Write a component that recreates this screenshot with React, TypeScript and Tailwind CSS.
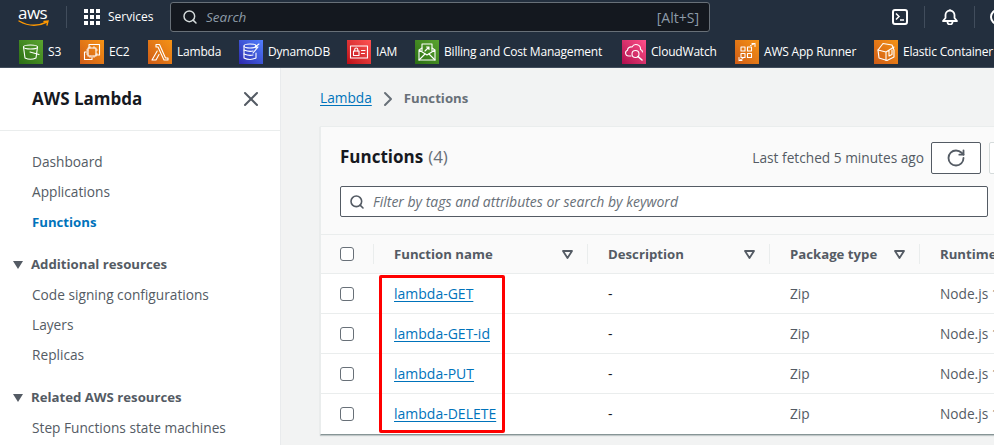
import type { ReactNode } from 'react';
import { ChevronRight, Search, X, RotateCw } from 'lucide-react';

const font = 'font-["Open_Sans",sans-serif]';

const Tile = ({ tone, children }: { tone: string; children: ReactNode }) => (
    <span className={`w-6 h-6 shrink-0 flex items-center justify-center ${tone}`}>
        <svg width="20" height="20" viewBox="0 0 20 20" fill="none" stroke="white" strokeWidth="1.1" strokeLinejoin="round" strokeLinecap="round">
            {children}
        </svg>
    </span>
);

const green = 'bg-linear-to-tr from-[#2a6e14] to-[#5ba52f]';
const orange = 'bg-linear-to-tr from-[#d05c17] to-[#f59314]';
const blue = 'bg-linear-to-tr from-[#2e27ad] to-[#527fff]';
const red = 'bg-linear-to-tr from-[#bd0816] to-[#ff5252]';
const pink = 'bg-linear-to-tr from-[#b0084d] to-[#ff4f8b]';

const favorites = [
    {
        label: 'S3', tone: green, w: 'w-[61px]', icon: (
            <>
                <ellipse cx="9.5" cy="5" rx="7" ry="2" />
                <path d="M2.5 5 L4 16 Q9.5 18.5 15 16 L16.5 5" />
                <path d="M9 10 L18 12.5" />
            </>
        ),
    },
    {
        label: 'EC2', tone: orange, w: 'w-[68px]', icon: (
            <>
                <path d="M7 6 V2.5 H17.5 V13 H14" />
                <path d="M5 10 H2.5 V17.5 H10 V15" />
                <rect x="6" y="6" width="8" height="8" />
                <path d="M8 4.5v1.5M12 4.5v1.5M8 14v1.5M12 14v1.5M4.5 8H6M4.5 12H6M14 8h1.5M14 12h1.5" strokeWidth="0.8" />
            </>
        ),
    },
    {
        label: 'Lambda', tone: orange, w: 'w-[91px]', icon: (
            <path d="M6 2.5 H9.5 L15.5 16 H18 V18 H14 L8 5 H6 Z M7.2 9 L2 18 H6 L9 12.5" />
        ),
    },
    {
        label: 'DynamoDB', tone: blue, w: 'w-[108px]', icon: (
            <>
                <ellipse cx="9" cy="4" rx="6" ry="2" />
                <path d="M3 4 V16 Q9 19 15 16 V11" />
                <path d="M3 8 Q8 10 12 9M3 12 Q8 14 12 13M15 4 V6" />
                <path d="M12 11 L17 5 H14 L18 2" />
            </>
        ),
    },
    {
        label: 'IAM', tone: red, w: 'w-[68px]', icon: (
            <>
                <rect x="1.5" y="4" width="17" height="12" />
                <rect x="4.5" y="9" width="5.5" height="4.5" />
                <path d="M5.7 9 V7.5 A1.5 1.5 0 0 1 8.8 7.5 V9M12.5 8.5h3.5M12.5 11.5h3" />
            </>
        ),
    },
    {
        label: 'Billing and Cost Management', tone: green, w: 'w-[207px]', icon: (
            <>
                <path d="M5 9 V2 H15 V9" />
                <path d="M2 8 L5 6M18 8 L15 6M2 8 V18 H18 V8 L10 13 Z" />
                <path d="M2 18 L8 12M18 18 L12 12M8 9 L12 5M9.5 5 H12 V7.5" />
            </>
        ),
    },
    {
        label: 'CloudWatch', tone: pink, w: 'w-[113px]', icon: (
            <>
                <path d="M7 14 H4.5 A3 3 0 0 1 3.5 8.2 A3.5 3.5 0 0 1 8 5 A4.5 4.5 0 0 1 16.5 7.5 A3 3 0 0 1 18.5 10" />
                <circle cx="11.5" cy="12" r="3.5" />
                <path d="M14 14.5 L18 18" strokeWidth="1.6" />
            </>
        ),
    },
    {
        label: 'AWS App Runner', tone: orange, w: 'w-[139px]', icon: (
            <>
                <rect x="4" y="5" width="4" height="4" />
                <rect x="10.5" y="5" width="4" height="4" />
                <rect x="4" y="11.5" width="4" height="4" />
                <rect x="10.5" y="11.5" width="4" height="4" />
                <path d="M13.5 3.5 L18 1.5M15 1.5 H18 V4.5M2 18.5 L6 16.5M2 15.5 V18.5 H5" strokeWidth="1" />
            </>
        ),
    },
    {
        label: 'Elastic Container Registry', tone: orange, w: 'w-[220px]', icon: (
            <>
                <path d="M7 1.5 L16 3 L18 8 V15 L11 18.5 L3 16 L2 8 Z" />
                <path d="M2 8 L10 10 L18 5M10 10 V18.5M13 8 V14 L16 12.5 V8" />
            </>
        ),
    },
];

const rows = ['lambda-GET', 'lambda-GET-id', 'lambda-PUT', 'lambda-DELETE'];

const Checkbox = () => <span className="block w-[14px] h-[14px] bg-white border border-[#687078] rounded-[3px]" />;

const SortCaret = () => (
    <svg width="11" height="9" viewBox="0 0 11 9" fill="none" stroke="#545b64" strokeWidth="1.8" strokeLinejoin="round">
        <path d="M1 1 H10 L5.5 8 Z" />
    </svg>
);

const SideLink = ({ children, active }: { children: ReactNode; active?: boolean }) => (
    <div className={`h-[30px] pl-8 flex items-center ${active ? 'pt-px text-[13.2px] font-bold text-[#0073bb]' : 'text-[13.7px] text-[#545b64]'}`}>
        {children}
    </div>
);

const SideSection = ({ children }: { children: ReactNode }) => (
    <div className="h-[31px] mt-3 flex items-center pl-[13px] text-[13.2px] font-bold text-[#545b64]">
        <span className="w-0 h-0 border-l-[5px] border-r-[5px] border-t-[8px] border-l-transparent border-r-transparent border-t-[#545b64] mr-2" />
        {children}
    </div>
);

const HeadCell = ({ w, label, caret, last }: { w: string; label: string; caret?: boolean; last?: boolean }) => (
    <div className={`${w} shrink-0 h-5 flex items-center justify-between pl-5 pr-[14px] ${last ? '' : 'border-r border-[#eaeded]'}`}>
        <span className="pt-px text-[13.2px] font-bold text-[#545b64] whitespace-nowrap">{label}</span>
        {caret && <SortCaret />}
    </div>
);

const App = () => {
    return (
        <div className={`w-[994px] h-[445px] overflow-hidden flex flex-col bg-[#f2f3f3] ${font}`}>
            {/* Top nav */}
            <div className="h-[68px] shrink-0 bg-[#232f3e] border-b border-[#414d5c] flex flex-col">
                <div className="h-[34px] flex items-center text-white">
                    <div className="w-[67px] shrink-0 h-[22px] border-r border-[#414d5c] pl-[18px] flex flex-col items-start">
                        <span className="text-[17px] leading-[14px] tracking-[-0.5px] text-white">aws</span>
                        <svg width="32" height="8" viewBox="0 0 32 8" fill="none" stroke="#f90" strokeWidth="1.4" strokeLinecap="round">
                            <path d="M1 1 Q15 9 29 2" />
                            <path d="M26 1.5 L30 1 L29 5" />
                        </svg>
                    </div>
                    <svg width="16" height="16" viewBox="0 0 16 16" fill="white" className="ml-[17px] shrink-0">
                        <rect x="0" y="0" width="4" height="4" />
                        <rect x="6" y="0" width="4" height="4" />
                        <rect x="12" y="0" width="4" height="4" />
                        <rect x="0" y="6" width="4" height="4" />
                        <rect x="6" y="6" width="4" height="4" />
                        <rect x="12" y="6" width="4" height="4" />
                        <rect x="0" y="12" width="4" height="4" />
                        <rect x="6" y="12" width="4" height="4" />
                        <rect x="12" y="12" width="4" height="4" />
                    </svg>
                    <span className="ml-2 w-[62px] shrink-0 text-[12px] font-medium">Services</span>
                    <div className="w-[540px] shrink-0 h-[30px] bg-[#14181f] border border-[#687078] rounded-[3px] flex items-center pl-[11px] pr-[10px]">
                        <Search size={16} strokeWidth={2.2} className="text-[#d5dbdb]" />
                        <span className="ml-[8px] italic text-[13.5px] text-[#8d9ba8]">Search</span>
                        <span className="ml-auto text-[14px] text-[#8d9ba8]">[Alt+S]</span>
                    </div>
                    <div className="ml-[182px] shrink-0 w-4 h-4 border-2 border-white rounded-[3px] relative">
                        <svg width="12" height="12" viewBox="0 0 12 12" fill="none" stroke="white" strokeWidth="1.5" className="absolute top-0 left-0">
                            <path d="M2 2.5 L5 5.5 L2 8.5M6 9 H10" />
                        </svg>
                    </div>
                    <div className="ml-4 shrink-0 w-px h-[22px] bg-[#414d5c]" />
                    <svg width="16" height="16" viewBox="0 0 16 16" fill="none" stroke="white" strokeWidth="1.8" className="ml-[17px] shrink-0" strokeLinejoin="round">
                        <path d="M1 12 H15 L12.5 9 V6 A4.5 4.5 0 0 0 3.5 6 V9 Z" />
                        <path d="M5.5 13 A2.5 2.5 0 0 0 10.5 13" />
                        <path d="M8 0.5 V1.5" />
                    </svg>
                    <div className="ml-4 shrink-0 w-px h-[22px] bg-[#414d5c]" />
                    <span className="ml-[15px] w-4 h-4 shrink-0 border-2 border-white rounded-full" />
                </div>
                <div className="h-[33px] pt-[6px] pl-[19px] flex items-start text-white whitespace-nowrap">
                    {favorites.map(({ label, tone, w, icon }) => (
                        <div key={label} className={`${w} shrink-0 flex items-center gap-[5px]`}>
                            <Tile tone={tone}>{icon}</Tile>
                            <span className="text-[12px] font-medium tracking-[-0.2px]">{label}</span>
                        </div>
                    ))}
                </div>
            </div>

            <div className="flex-1 flex min-h-0">
                {/* Sidebar */}
                <div className="w-[281px] shrink-0 bg-white border-r border-[#e9ebed] overflow-hidden">
                    <div className="h-[63px] pl-8 pr-[17px] border-b border-[#eaeded] flex items-center justify-between">
                        <span className="text-[17px] font-bold text-[#16191f]">AWS Lambda</span>
                        <X size={24} strokeWidth={2} className="text-[#545b64]" />
                    </div>
                    <div className="pt-4">
                        <SideLink>Dashboard</SideLink>
                        <SideLink>Applications</SideLink>
                        <SideLink active>Functions</SideLink>
                        <SideSection>Additional resources</SideSection>
                        <SideLink>Code signing configurations</SideLink>
                        <SideLink>Layers</SideLink>
                        <SideLink>Replicas</SideLink>
                        <SideSection>Related AWS resources</SideSection>
                        <SideLink>Step Functions state machines</SideLink>
                    </div>
                </div>

                {/* Content */}
                <div className="flex-1 min-w-0 pl-[39px] relative">
                    <div className="h-[58px] pt-[3px] flex items-center">
                        <span className="text-[13.7px] text-[#0073bb] underline underline-offset-2">Lambda</span>
                        <ChevronRight size={24} strokeWidth={2} className="mx-1 text-[#687078]" />
                        <span className="text-[13.2px] font-bold text-[#687078]">Functions</span>
                    </div>
                    <div className="w-[719px] bg-white border-l border-t border-[#eaeded] border-b-[#879596] shadow-[0_1px_1px_0_rgba(0,28,36,0.2)] border-b">
                        <div className="bg-[#fafafa] h-[108px] border-b border-[#eaeded] pl-[19px] pt-[15px]">
                            <div className="flex items-center h-8">
                                <span className="pb-[2px] text-[17px] font-bold text-[#16191f]">Functions</span>
                                <span className="pb-[2px] ml-[5px] text-[17px] text-[#687078]">(4)</span>
                                <span className="ml-auto text-[13.7px] text-[#545b64]">Last fetched 5 minutes ago</span>
                                <span className="ml-[7px] w-[50px] h-8 bg-white border border-[#545b64] rounded-[2px] flex items-center justify-center">
                                    <RotateCw size={20} strokeWidth={2.2} className="text-[#545b64]" />
                                </span>
                                <span className="ml-2 w-[50px] h-8 bg-white border border-[#d5dbdb] rounded-[2px]" />
                            </div>
                            <div className="mt-3 w-[648px] h-[31px] bg-white border border-[#545b64] rounded-[2px] flex items-center pl-2">
                                <Search size={16} strokeWidth={2.4} className="text-[#545b64]" />
                                <span className="ml-[8px] italic text-[14px] text-[#687078]">Filter by tags and attributes or search by keyword</span>
                            </div>
                        </div>
                        <div className="h-[39px] bg-[#fafafa] border-b border-[#eaeded] flex items-center overflow-hidden">
                            <div className="w-[53px] shrink-0 h-5 pl-[19px] border-r border-[#eaeded] flex items-center"><Checkbox /></div>
                            <HeadCell w="w-[214px]" label="Function name" caret />
                            <HeadCell w="w-[182px]" label="Description" caret />
                            <HeadCell w="w-[150px]" label="Package type" caret />
                            <HeadCell w="w-[119px]" label="Runtime" last />
                        </div>
                        {rows.map((name, i) => (
                            <div key={name} className={`h-10 flex items-center text-[14px] text-[#16191f] whitespace-nowrap ${i < rows.length - 1 ? 'border-b border-[#eaeded]' : 'pb-px'}`}>
                                <div className="w-[53px] pl-[19px]"><Checkbox /></div>
                                <div className="w-[214px] pl-5 text-[#0073bb] underline underline-offset-2">{name}</div>
                                <div className="w-[182px] pl-5">-</div>
                                <div className="w-[150px] pl-5 pt-px text-[13.7px] text-[#545b64]">Zip</div>
                                <div className="pl-5 pt-px text-[13.7px] text-[#545b64]">Node.js 16.x</div>
                            </div>
                        ))}
                    </div>
                    {/* Red highlight drawn over the table */}
                    <div className="absolute left-[98px] top-[207px] w-[126px] h-[158px] border-[3px] border-[#f00] rounded-[2px]" />
                </div>
            </div>
        </div>
    );
};

export default App;
